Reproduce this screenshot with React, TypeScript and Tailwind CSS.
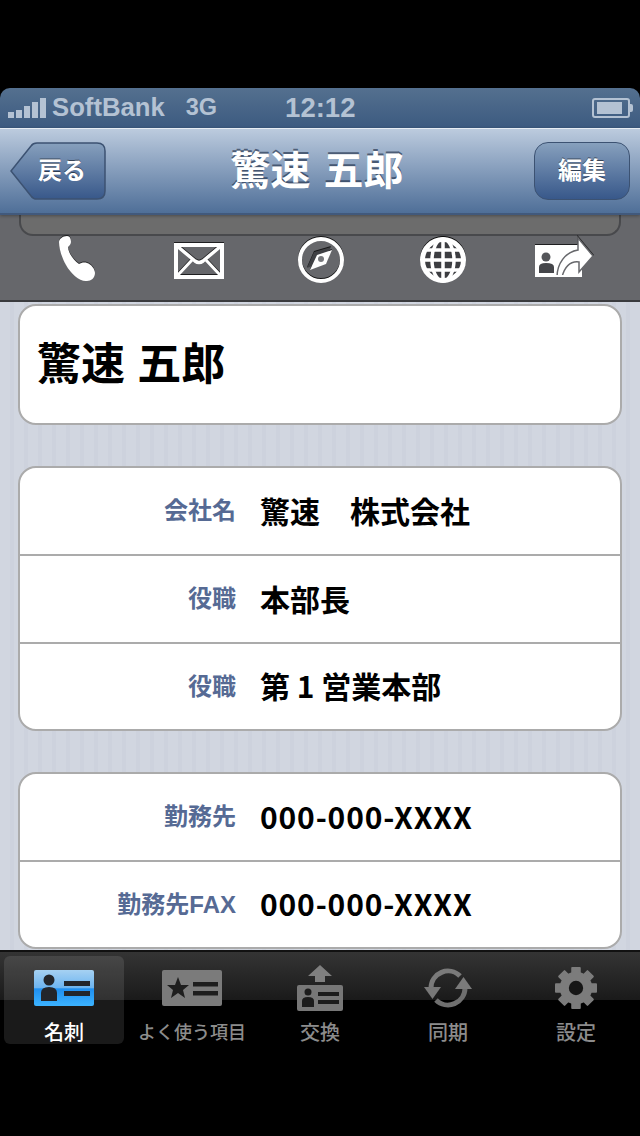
import React from 'react';

const jp = "font-['Helvetica','Liberation_Sans','Noto_Sans_CJK_JP',sans-serif]";

const PhoneIcon = () => (
  <svg width="42" height="48" viewBox="0 0 42 48" className="drop-shadow-[0_-1px_0_rgba(0,0,0,0.6)]">
    <path
      d="M3 6 C3 3 7 0 11 0 C14 0 15 3 15 6 C15 8 13 10 12 11 C12 16 17 24 23 28 C25 27 28 26 31 27 C35 28 39 33 39 37 C39 42 35 45 31 45 C24 46 15 38 10 29 C6 22 3 13 3 6 Z"
      fill="white"
    />
  </svg>
);

const MailIcon = () => (
  <svg width="50" height="36" viewBox="0 0 50 36" className="drop-shadow-[0_-1px_0_rgba(0,0,0,0.7)]">
    <rect x="2" y="2" width="46" height="32" fill="none" stroke="white" strokeWidth="4" />
    <path d="M3 3 L21 18 Q25 21 29 18 L47 3" fill="none" stroke="white" strokeWidth="3.5" />
    <path d="M3 33 L18 17 M47 33 L32 17" fill="none" stroke="white" strokeWidth="3" />
  </svg>
);

const CompassIcon = () => (
  <svg width="46" height="46" viewBox="0 0 46 46" className="drop-shadow-[0_-1px_0_rgba(0,0,0,0.8)]">
    <circle cx="23" cy="23" r="21" fill="none" stroke="white" strokeWidth="4" />
    <path d="M9 31 L16 15 L33 10 L25 25 Z" fill="#3f4044" />
    <path d="M12 33 L19 18 L34 13 L28 27 Z" fill="white" />
    <circle cx="23" cy="22" r="3" fill="#77787c" />
  </svg>
);

const GlobeIcon = () => (
  <svg width="46" height="46" viewBox="0 0 46 46" className="drop-shadow-[0_-1px_0_rgba(0,0,0,0.9)]">
    <circle cx="23" cy="23" r="20.5" fill="#3c3d41" stroke="white" strokeWidth="5" />
    <g fill="none" stroke="white" strokeWidth="3.5">
      <path d="M4 23 H42 M7 13 H39 M7 33 H39 M23 3 V43" />
      <ellipse cx="23" cy="23" rx="11" ry="21" />
    </g>
  </svg>
);

const ShareCardIcon = () => (
  <svg width="60" height="42" viewBox="0 0 60 42" className="drop-shadow-[0_-1px_0_rgba(0,0,0,0.7)]">
    <rect x="0" y="9" width="47" height="32" fill="white" />
    <circle cx="11" cy="21" r="4.5" fill="#55565a" />
    <path d="M4 37 V31 Q4 27 11 27 Q19 27 19 31 V37 Z" fill="#45464a" />
    <path
      d="M22 41 C22 28 30 16 43 14 V2 L58 20 L44 36 V26 C36 25 30 30 27 41 Z"
      fill="white"
      stroke="#67686c"
      strokeWidth="1.5"
    />
    <rect x="21" y="39" width="26" height="2" fill="white" />
  </svg>
);

const CardTabIcon = () => (
  <svg width="60" height="38" viewBox="0 0 60 38">
    <defs>
      <linearGradient id="tabBlue" x1="0" y1="0" x2="0" y2="1">
        <stop offset="0" stopColor="#a6d1f2" />
        <stop offset="0.5" stopColor="#6cb4f0" />
        <stop offset="0.52" stopColor="#1f8ff0" />
        <stop offset="1" stopColor="#3cb3ff" />
      </linearGradient>
    </defs>
    <rect width="60" height="36" y="1" rx="2" fill="url(#tabBlue)" />
    <circle cx="15" cy="11" r="5.5" fill="#23262b" />
    <path d="M7 32 V24 Q7 18 15 18 Q23 18 23 24 V32 Z" fill="#23262b" />
    <rect x="30" y="12" width="26" height="5" fill="#23262b" />
    <rect x="30" y="22" width="26" height="5" fill="#23262b" />
  </svg>
);

const StarTabIcon = () => (
  <svg width="60" height="36" viewBox="0 0 60 36">
    <rect width="60" height="36" rx="2" fill="#7b7b7b" />
    <path d="M16 7 L19 15 L27 15 L21 20 L23 28 L16 23 L9 28 L11 20 L5 15 L13 15 Z" fill="#1e1e1e" />
    <rect x="31" y="12" width="25" height="4.5" fill="#1e1e1e" />
    <rect x="31" y="21" width="25" height="4.5" fill="#1e1e1e" />
  </svg>
);

const ExchangeIcon = () => (
  <svg width="46" height="46" viewBox="0 0 46 46">
    <path d="M23 0 L35 11 H28 V17 H18 V11 H11 Z" fill="#7f7f7f" />
    <rect y="20" width="46" height="26" rx="2" fill="#777" />
    <circle cx="11" cy="27" r="3.5" fill="#1c1c1c" />
    <path d="M5 42 V36 Q5 32 11 32 Q17 32 17 36 V42 Z" fill="#1c1c1c" />
    <rect x="21" y="27" width="21" height="4" fill="#1c1c1c" />
    <rect x="21" y="35" width="21" height="4" fill="#1c1c1c" />
  </svg>
);

const SyncIcon = () => (
  <svg width="48" height="42" viewBox="0 0 48 42" fill="none">
    <path d="M7 21 A17 17 0 0 1 36 9" stroke="#7a7a7a" strokeWidth="5" />
    <path d="M41 21 A17 17 0 0 1 12 33" stroke="#6f6f6f" strokeWidth="5" />
    <path d="M0 20 H17 L8.5 32 Z" fill="#787878" />
    <path d="M48 22 H31 L39.5 10 Z" fill="#7a7a7a" />
  </svg>
);

const GearIcon = () => (
  <svg width="42" height="42" viewBox="0 0 44 44">
    <g fill="#7c7c7c">
      <rect x="17" y="0" width="10" height="44" rx="1" />
      <rect x="17" y="0" width="10" height="44" rx="1" transform="rotate(45 22 22)" />
      <rect x="17" y="0" width="10" height="44" rx="1" transform="rotate(90 22 22)" />
      <rect x="17" y="0" width="10" height="44" rx="1" transform="rotate(135 22 22)" />
      <circle cx="22" cy="22" r="17" />
    </g>
    <circle cx="22" cy="22" r="7.5" fill="#161616" />
  </svg>
);

const Row = ({ label, value, last, phone }: { label: string; value: string; last?: boolean; phone?: boolean }) => (
  <div className={`flex items-center ${last ? 'h-[85px]' : 'h-[88px] border-b-2 border-[#ababab]'}`}>
    <div className="w-[216px] text-right text-[24px] font-bold leading-none text-[#566a94]">{label}</div>
    <div
      className={`ml-[24px] pb-[3px] font-['Noto_Sans_CJK_JP',sans-serif] text-[30px] font-bold leading-none text-black ${
        phone ? 'tracking-[0.85px]' : ''
      }`}
    >
      {value}
    </div>
  </div>
);

const Card = ({ children, className = '' }: { children: React.ReactNode; className?: string }) => (
  <div className={`mx-[18px] overflow-hidden rounded-[18px] border-2 border-[#ababab] bg-white ${className}`}>
    {children}
  </div>
);

const tabs = [
  { label: '名刺', icon: <CardTabIcon />, active: true },
  { label: 'よく使う項目', icon: <StarTabIcon /> },
  { label: '交換', icon: <ExchangeIcon /> },
  { label: '同期', icon: <SyncIcon /> },
  { label: '設定', icon: <GearIcon /> },
];

export default function App() {
  return (
    <div className={`flex h-[1136px] w-[640px] flex-col overflow-hidden bg-black ${jp}`}>
      <div className="h-[88px] shrink-0" />

      {/* status bar */}
      <div className="flex h-[40px] shrink-0 items-center rounded-t-[10px] bg-gradient-to-b from-[#54708f] to-[#3c5a80] pl-[8px] pr-[7px] text-[#b4c2d3]">
        <div className="flex items-end gap-[2px]">
          <span className="h-[6px] w-[6px] bg-[#b4c2d3]" />
          <span className="h-[8px] w-[6px] bg-[#b4c2d3]" />
          <span className="h-[12px] w-[6px] bg-[#b4c2d3]" />
          <span className="h-[16px] w-[6px] bg-[#b4c2d3]" />
          <span className="h-[20px] w-[6px] bg-[#b4c2d3]" />
        </div>
        <span className="ml-[6px] text-[25.7px] font-bold leading-none">SoftBank</span>
        <span className="ml-[21px] text-[23.5px] font-bold leading-none">3G</span>
        <span className="ml-[68px] text-[27.5px] font-bold leading-none">12:12</span>
        <div className="ml-auto flex items-center">
          <div className="flex h-[20px] w-[38px] items-center rounded-[3px] border-2 border-[#b4c2d3] py-[2px] pl-[3px]">
            <div className="h-full w-[25px] bg-[#b4c2d3]" />
          </div>
          <div className="h-[8px] w-[3px] rounded-r-[2px] bg-[#b4c2d3]" />
        </div>
      </div>

      {/* nav bar */}
      <div className="relative z-10 flex h-[87px] shrink-0 items-center justify-between border-t border-b-2 border-t-[#e6ecf3] border-b-[#41597c] bg-gradient-to-b from-[#bccbde] to-[#4f6f98] pl-[10px] pr-[10px] shadow-[0_1px_3px_rgba(0,0,0,0.3)]">
        <div className="relative flex h-[58px] w-[96px] items-center justify-end">
          <svg width="96" height="58" viewBox="0 0 96 58" className="absolute left-0 top-0">
            <defs>
              <linearGradient id="backGrad" x1="0" y1="0" x2="0" y2="1">
                <stop offset="0" stopColor="#87a0bd" />
                <stop offset="1" stopColor="#38588a" />
              </linearGradient>
            </defs>
            <path
              d="M1 29 L21 4 Q23 1 27 1 H87 Q95 1 95 9 V49 Q95 57 87 57 H27 Q23 57 21 54 Z"
              fill="url(#backGrad)"
              stroke="#3c5272"
              strokeWidth="1.5"
            />
          </svg>
          <span className="relative mr-[20px] text-[24px] font-bold leading-none text-white [text-shadow:0_-1px_0_rgba(0,0,0,0.5)]">戻る</span>
        </div>
        <h1 className="mr-[6px] text-[40px] font-bold leading-none text-white [word-spacing:2px] [text-shadow:0_-2px_0_rgba(40,55,80,0.7)]">驚速 五郎</h1>
        <div className="flex h-[58px] w-[96px] items-center justify-center rounded-[14px] border-[1.5px] border-[#3c5272] bg-gradient-to-b from-[#87a0bd] to-[#38588a] text-[24px] font-bold leading-none text-white [text-shadow:0_-1px_0_rgba(0,0,0,0.5)]">
          編集
        </div>
      </div>

      {/* action toolbar */}
      <div className="flex h-[87px] shrink-0 flex-col border-b-2 border-b-[#3a3b3e] bg-[#66676b]">
        <div className="mx-[19px] h-[21px] shrink-0 rounded-b-[14px] border-x-2 border-b-2 border-[#48494c] bg-[#6c6c6c]" />
        <div className="flex h-[56px] items-start pl-[16px]">
          <div className="flex w-[122px] justify-center"><PhoneIcon /></div>
          <div className="flex w-[122px] justify-center pt-[7px]"><MailIcon /></div>
          <div className="flex w-[122px] justify-center pt-[1px]"><CompassIcon /></div>
          <div className="flex w-[122px] justify-center pt-[1px]"><GlobeIcon /></div>
          <div className="flex w-[122px] justify-center"><ShareCardIcon /></div>
        </div>
      </div>

      {/* scrolling content */}
      <div className="flex h-[648px] shrink-0 flex-col overflow-hidden bg-[#d1d6e0] bg-[repeating-linear-gradient(90deg,#d1d6e0_0,#d1d6e0_10px,#cdd2dd_10px,#cdd2dd_14px)] pt-[2px]">
        <Card className="flex h-[121px] shrink-0 items-center pl-[17px]">
          <span className="text-[44px] font-bold leading-none text-black">驚速 五郎</span>
        </Card>
        <Card className="mt-[41px] shrink-0">
          <Row label="会社名" value="驚速　株式会社" />
          <Row label="役職" value="本部長" />
          <Row label="役職" value="第 1 営業本部" last />
        </Card>
        <Card className="mt-[41px] shrink-0">
          <Row label="勤務先" value="000-000-XXXX" phone />
          <Row label="勤務先FAX" value="000-000-XXXX" last phone />
        </Card>
      </div>

      {/* tab bar */}
      <div className="flex h-[94px] shrink-0 border-t-2 border-t-[#111] bg-[linear-gradient(to_bottom,#343434_0,#1a1a1a_48px,#000_48px,#000_100%)] pt-[4px]">
        {tabs.map(tab => (
          <div key={tab.label} className="flex w-[128px] justify-center">
            <div className={`flex h-[88px] w-[120px] flex-col items-center rounded-[6px] ${tab.active ? 'bg-white/10 text-white' : 'text-[#8c8c8c]'}`}>
              <div className="flex h-[58px] shrink-0 items-center justify-center pt-[5px]">{tab.icon}</div>
              <div className="mt-[8px] flex h-[22px] shrink-0 items-center">
                <span className={`whitespace-nowrap font-medium leading-none ${tab.label.length > 2 ? 'text-[18px]' : 'text-[20px]'}`}>{tab.label}</span>
              </div>
            </div>
          </div>
        ))}
      </div>

      <div className="h-[92px] shrink-0" />
    </div>
  );
}
